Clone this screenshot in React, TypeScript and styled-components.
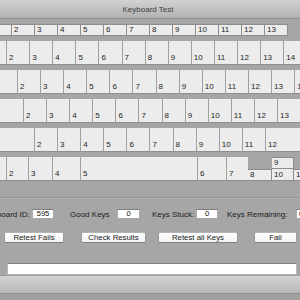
import React from 'react';
import styled, { createGlobalStyle } from 'styled-components';

const GlobalStyle = createGlobalStyle`
  html, body { margin: 0; padding: 0; background: #a6a6a6; overflow: hidden; }
  body { font-family: "Liberation Sans", Arial, sans-serif; }
`;

const Screen = styled.div`
  width: 300px;
  height: 300px;
  overflow: hidden;
  background: #a6a6a6;
`;

const Window = styled.div`
  width: 330px;
  margin-left: -17px;
  display: flex;
  flex-direction: column;
`;

const TitleBar = styled.div`
  height: 18px;
  flex: none;
  border-bottom: 1px solid #8e8e8e;
  background: linear-gradient(#d2d2d2, #b1b1b1);
  display: flex;
  align-items: center;
  justify-content: center;
  font-size: 8px;
  color: #3c3c3c;
`;

const Keyboard = styled.div`
  display: flex;
  flex-direction: column;
  gap: 5px;
  padding-top: 5px;
`;

const KeyRow = styled.div<{ $indent?: number; $h?: number }>`
  display: flex;
  height: ${(p) => p.$h ?? 24}px;
  margin-left: ${(p) => p.$indent ?? 0}px;
  flex: none;
`;

const Key = styled.div<{ $w: number; $half?: boolean }>`
  flex: none;
  box-sizing: border-box;
  width: ${(p) => p.$w}px;
  background: #ececec;
  display: flex;
  font-size: 8px;
  line-height: 8px;
  color: #1e1e1e;
  white-space: nowrap;
  overflow: hidden;
  ${(p) =>
    p.$half
      ? `
    height: 12px;
    align-self: flex-end;
    align-items: center;
    padding-left: 2px;
    border-top: 1px solid #8d8d8d;
    border-right: 1px solid #8d8d8d;
    border-bottom: 1px solid #8d8d8d;
  `
      : `
    align-items: flex-end;
    padding: 0 0 2px 2px;
    border-left: 1px solid #a0a0a0;
    border-bottom: 1px solid #8f8f8f;
  `}
`;

const KeyStack = styled.div<{ $w: number }>`
  flex: none;
  width: ${(p) => p.$w}px;
  display: flex;
  flex-direction: column;
  & > ${Key} {
    width: 100%;
    align-self: stretch;
  }
  & > ${Key}:last-child {
    border-top: none;
    height: 12px;
  }
`;

const Separator = styled.div`
  margin-top: 16px;
  height: 1px;
  background: #959595;
  box-shadow: 0 1px 0 #aeaeae;
`;

const StatusRow = styled.div`
  display: flex;
  align-items: center;
  height: 10px;
  margin-top: 11px;
  font-size: 8px;
  color: #1a1a1a;
`;

const StatusLabel = styled.span<{ $w: number; $ml: number }>`
  flex: none;
  width: ${(p) => p.$w}px;
  margin-left: ${(p) => p.$ml}px;
  white-space: nowrap;
`;

const ValueBox = styled.div<{ $w: number; $ml: number; $left?: boolean }>`
  flex: none;
  box-sizing: border-box;
  width: ${(p) => p.$w}px;
  height: 10px;
  margin-left: ${(p) => p.$ml}px;
  padding-left: ${(p) => (p.$left ? 2 : 0)}px;
  background: #ffffff;
  border: 1px solid #a9a9a9;
  border-top-color: #7c7c7c;
  display: flex;
  align-items: center;
  justify-content: ${(p) => (p.$left ? 'flex-start' : 'center')};
  font-size: 7.5px;
  line-height: 8px;
  color: #111;
`;

const ButtonRow = styled.div`
  display: flex;
  margin-top: 13px;
  height: 11px;
`;

const Button = styled.div<{ $w: number; $ml: number }>`
  flex: none;
  box-sizing: border-box;
  width: ${(p) => p.$w}px;
  height: 11px;
  margin-left: ${(p) => p.$ml}px;
  background: linear-gradient(#ffffff, #f3f3f3);
  border: 1px solid #9a9a9a;
  border-top-color: #b3b3b3;
  border-bottom-color: #828282;
  border-radius: 2px;
  display: flex;
  align-items: center;
  justify-content: center;
  font-size: 7.8px;
  line-height: 8px;
  color: #1a1a1a;
  white-space: nowrap;
`;

const TextField = styled.div`
  box-sizing: border-box;
  margin-top: 20px;
  margin-left: 24px;
  width: 290px;
  height: 12px;
  background: #ffffff;
  border: 1px solid #b9b9b9;
  border-top-color: #808080;
`;

const BottomBar = styled.div`
  height: 17px;
  border-top: 1px solid #9c9c9c;
  border-bottom: 1px solid #8c8c8c;
  background: linear-gradient(#d3d3d3, #b7b7b7);
`;

const BottomEdge = styled.div`
  height: 8px;
  background: linear-gradient(#a2a2a2, #9c9c9c);
`;

const range = (a: number, b: number) => Array.from({ length: b - a + 1 }, (_, i) => a + i);

const W = 23.1;

export default function App() {
  return (
    <>
      <GlobalStyle />
      <Screen>
        <Window>
          <TitleBar>Keyboard Test</TitleBar>
          <Keyboard>
            <KeyRow $h={12} $indent={6}>
              {range(1, 13).map((n) => (
                <Key key={n} $w={23} $half>
                  {n}
                </Key>
              ))}
            </KeyRow>
            <KeyRow>
              {range(1, 15).map((n) => (
                <Key key={n} $w={W}>
                  {n}
                </Key>
              ))}
            </KeyRow>
            <KeyRow>
              <Key $w={34}>1</Key>
              {range(2, 14).map((n) => (
                <Key key={n} $w={W}>
                  {n}
                </Key>
              ))}
            </KeyRow>
            <KeyRow>
              <Key $w={40}>1</Key>
              {range(2, 14).map((n) => (
                <Key key={n} $w={W}>
                  {n}
                </Key>
              ))}
            </KeyRow>
            <KeyRow>
              <Key $w={51}>1</Key>
              {range(2, 11).map((n) => (
                <Key key={n} $w={W}>
                  {n}
                </Key>
              ))}
              <Key $w={60}>12</Key>
            </KeyRow>
            <KeyRow>
              <Key $w={23}>1</Key>
              <Key $w={22}>2</Key>
              <Key $w={24}>3</Key>
              <Key $w={28}>4</Key>
              <Key $w={117}>5</Key>
              <Key $w={29}>6</Key>
              <Key $w={22}>7</Key>
              <Key $w={24} $half>
                8
              </Key>
              <KeyStack $w={22}>
                <Key $w={22} $half>
                  9
                </Key>
                <Key $w={22} $half>
                  10
                </Key>
              </KeyStack>
              <Key $w={23} $half>
                11
              </Key>
            </KeyRow>
          </Keyboard>
          <Separator />
          <StatusRow>
            <StatusLabel $w={47} $ml={0}>Keyboard ID:</StatusLabel>
            <ValueBox $w={22} $ml={2}>595</ValueBox>
            <StatusLabel $w={38} $ml={16}>Good Keys</StatusLabel>
            <ValueBox $w={23} $ml={9}>0</ValueBox>
            <StatusLabel $w={40} $ml={12}>Keys Stuck:</StatusLabel>
            <ValueBox $w={22} $ml={4}>0</ValueBox>
            <StatusLabel $w={60} $ml={9}>Keys Remaining:</StatusLabel>
            <ValueBox $w={22} $ml={9} $left>0</ValueBox>
          </StatusRow>
          <ButtonRow>
            <Button $w={60} $ml={21}>Retest Fails</Button>
            <Button $w={65} $ml={17}>Check Results</Button>
            <Button $w={80} $ml={12}>Retest all Keys</Button>
            <Button $w={43} $ml={16}>Fail</Button>
          </ButtonRow>
          <TextField />
          <BottomBar />
          <BottomEdge />
        </Window>
      </Screen>
    </>
  );
}
